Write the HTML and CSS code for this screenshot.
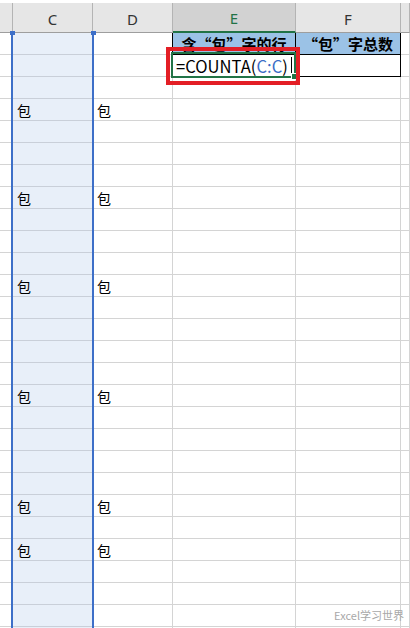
FILE: index.html
```html
<!DOCTYPE html>
<html lang="zh-CN">
<head>
    <meta charset="UTF-8">
    <title>COUNTA</title>
    <link rel="stylesheet" href="styles.css">
</head>
<body>
<div class="sheet" id="sheet">
    <div class="row head">
        <div class="cell"></div>
        <div class="cell">C</div>
        <div class="cell">D</div>
        <div class="cell active-col">E</div>
        <div class="cell">F</div>
        <div class="cell"></div>
    </div>
    <div class="row">
        <div class="cell"></div>
        <div class="cell col-c"></div>
        <div class="cell edge"></div>
        <div class="cell tbl title">含“包”字的行</div>
        <div class="cell tbl title">“包”字总数</div>
        <div class="cell"></div>
    </div>
    <div class="row">
        <div class="cell"></div>
        <div class="cell col-c"></div>
        <div class="cell edge"></div>
        <div class="cell tbl formula">=COUNTA(<span class="ref">C:C</span>)<span class="caret"></span></div>
        <div class="cell tbl"></div>
        <div class="cell"></div>
    </div>
    <div id="rows"></div>

    <div class="range"><i class="grip left"></i><i class="grip right"></i></div>
    <div class="active-cell"><i class="fill"></i></div>
    <div class="mark"></div>
    <div class="watermark">Excel学习世界</div>
</div>
<script>
    // rows after the two table rows; index counts from the first data row
    const filled = [3, 7, 11, 16, 21, 23];
    const rows = document.getElementById('rows');
    for (let i = 2; i < 28; i++) {
        const v = filled.includes(i) ? '包' : '';
        const row = document.createElement('div');
        row.className = 'row';
        row.innerHTML =
            '<div class="cell"></div>' +
            `<div class="cell col-c">${v}</div>` +
            `<div class="cell">${v}</div>` +
            '<div class="cell"></div><div class="cell"></div><div class="cell"></div>';
        rows.appendChild(row);
    }
</script>
</body>
</html>
```

FILE: styles.css
```css
body {
    margin: 0;
    background: #fff;
    font-family: "Noto Sans CJK SC", "Noto Sans", sans-serif;
    overflow: hidden;
}
.sheet {
    position: relative;
    width: 410px;
    height: 628px;
    overflow: hidden;
}
.row {
    display: grid;
    grid-template-columns: 13px 80px 80px 123px 105px 1fr;
    height: 22px;
}
.cell {
    box-sizing: border-box;
    border-right: 1px solid #d4d4d4;
    border-bottom: 1px solid #d4d4d4;
    font-size: 14px;
    color: #000;
    padding-left: 4px;
    display: flex;
    align-items: center;
    white-space: nowrap;
    overflow: hidden;
}
.col-c {
    background: #e8eff9;
    border-bottom-color: #c9cfd9;
}
.head {
    height: 33px;
    padding-top: 3px;
    box-sizing: border-box;
}
.head .cell {
    background: #e6e6e6;
    border-right-color: #b4b4b4;
    border-bottom-color: #9e9e9e;
    justify-content: center;
    align-items: flex-end;
    padding: 0 0 3px;
    font-family: "Noto Sans", sans-serif;
    font-size: 15px;
    color: #333;
}
.head .active-col {
    background: #d2d2d2;
    color: #217346;
    border-bottom: 2px solid #217346;
}
.edge {
    border-right-color: #000;
}
.tbl {
    border-right-color: #000;
    border-bottom-color: #000;
}
.title {
    background: #9bc2e6;
    font-weight: bold;
    font-size: 15px;
    justify-content: center;
    align-items: flex-end;
    padding: 0;
}
.formula {
    font-size: 16.6px;
    padding-left: 3px;
}
.ref {
    color: #3a6cc6;
}
.caret {
    display: inline-block;
    width: 1px;
    height: 18px;
    background: #000;
    margin-left: 3px;
}
.range {
    position: absolute;
    left: 11px;
    top: 33px;
    width: 79px;
    bottom: 0;
    border-left: 2px solid #3d6fc8;
    border-right: 2px solid #3d6fc8;
}
.grip {
    position: absolute;
    top: -2px;
    width: 5px;
    height: 4px;
    background: #3d6fc8;
}
.grip.left {
    left: -3px;
}
.grip.right {
    right: -4px;
}
.active-cell {
    position: absolute;
    left: 171px;
    top: 52px;
    width: 121px;
    height: 22px;
    border: 2px solid #217346;
}
.fill {
    position: absolute;
    right: -4px;
    bottom: -4px;
    width: 5px;
    height: 5px;
    background: #217346;
    border: 1px solid #fff;
}
.mark {
    position: absolute;
    left: 166px;
    top: 47px;
    width: 126px;
    height: 30px;
    border: 4px solid #e31e25;
}
.watermark {
    position: absolute;
    right: 6px;
    bottom: 5px;
    font-size: 11px;
    color: #a8a8a8;
}
```
